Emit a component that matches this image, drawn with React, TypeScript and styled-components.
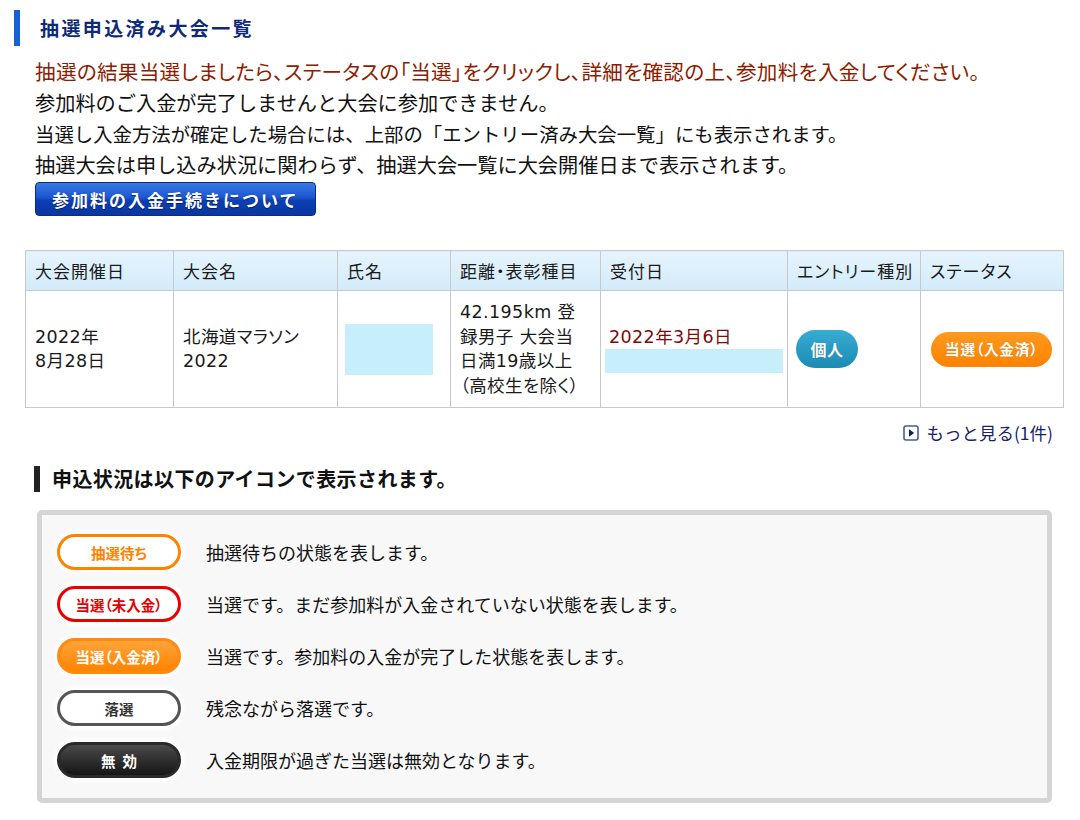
import React from 'react';
import styled, { createGlobalStyle, css } from 'styled-components';

const JP = `"Noto Sans CJK JP", "Noto Sans", sans-serif`;
const TABLE_FONT = `"DejaVu Sans", "Noto Sans CJK JP", sans-serif`;

const GlobalStyle = createGlobalStyle`
  html, body {
    margin: 0;
    padding: 0;
    background: #ffffff;
  }
  body {
    font-family: ${JP};
    color: #111111;
  }
`;

const Page = styled.div`
  width: 1080px;
  padding-top: 10px;
  padding-bottom: 18px;
`;

const PageTitle = styled.h1`
  margin: 0 0 0 14px;
  height: 36px;
  border-left: 6px solid #1462d4;
  padding-left: 20px;
  font-size: 19px;
  line-height: 36px;
  font-weight: 700;
  letter-spacing: 2.4px;
  color: #0f2a78;
`;

const Notes = styled.div`
  margin-top: 10px;
  padding-left: 35px;
`;

type NoteTone = 'alert' | 'plain' | 'narrow';

const Note = styled.p<{ $tone?: NoteTone }>`
  margin: 0;
  font-size: 20.2px;
  line-height: 31px;
  color: #111111;
  white-space: nowrap;
  ${(p) =>
    p.$tone === 'alert' &&
    css`
      font-size: 20.6px;
      letter-spacing: 0.3px;
      font-feature-settings: 'palt';
      color: #8e1c00;
    `}
  ${(p) =>
    p.$tone === 'narrow' &&
    css`
      font-size: 19.4px;
    `}
`;

const PayButton = styled.button`
  display: block;
  margin-top: 2px;
  width: 281px;
  height: 34px;
  padding: 0 0 0 16px;
  text-align: left;
  border: 1px solid #0a2b86;
  border-radius: 4px;
  background: linear-gradient(#3a7ae6 0%, #1c56cf 45%, #0c3fb4 55%, #0a37a0 100%);
  color: #ffffff;
  font-family: ${JP};
  font-size: 17px;
  font-weight: 700;
  letter-spacing: 2px;
  text-shadow: 0 1px 1px rgba(0, 0, 40, 0.6);
  cursor: pointer;
`;

const EntryTable = styled.table`
  margin: 34px 0 0 25px;
  width: 1038px;
  border-collapse: collapse;
  table-layout: fixed;
  border: 1px solid #c9c9c9;
  font-family: ${TABLE_FONT};
  font-feature-settings: 'palt';
`;

const HeadCell = styled.th`
  height: 39px;
  padding: 0 9px;
  text-align: left;
  font-family: ${JP};
  font-size: 17px;
  font-weight: 400;
  letter-spacing: 1px;
  color: #1a1a1a;
  background: linear-gradient(#e6f4fd, #d3ebfa);
  border: 1px solid #c9c9c9;
  white-space: nowrap;
`;

const BodyCell = styled.td<{ $pad?: number }>`
  height: 116px;
  padding: 0 ${(p) => p.$pad ?? 9}px;
  vertical-align: middle;
  font-size: 17.5px;
  line-height: 24.5px;
  letter-spacing: 0.4px;
  color: #1a1a1a;
  border: 1px solid #c9c9c9;
  white-space: nowrap;
`;

const Masked = styled.div<{ $w: number; $h: number }>`
  width: ${(p) => p.$w}px;
  height: ${(p) => p.$h}px;
  background: #c6eefb;
`;

const ReceiptDate = styled.div`
  padding-left: 4px;
  color: #7d0a0a;
`;

const Pill = styled.span<{ $kind: 'solo' | 'paid' }>`
  display: inline-flex;
  align-items: center;
  justify-content: center;
  font-family: ${JP};
  font-weight: 700;
  color: #ffffff;
  text-shadow: 0 0 1px rgba(0, 0, 0, 0.25);
  ${(p) =>
    p.$kind === 'solo'
      ? css`
          width: 62px;
          height: 38px;
          border-radius: 19px;
          font-size: 16px;
          background: linear-gradient(#38acd2, #1b8bb4);
        `
      : css`
          width: 121px;
          height: 35px;
          border-radius: 18px;
          font-size: 15px;
          letter-spacing: 0.5px;
          background: linear-gradient(#ff9a1e, #ff8200);
        `}
`;

const PillWrap = styled.div<{ $left: number }>`
  display: flex;
  padding-left: ${(p) => p.$left}px;
`;

const MoreRow = styled.div`
  display: flex;
  justify-content: flex-end;
  margin-top: 13px;
  padding-right: 27px;
`;

const MoreLink = styled.a`
  display: inline-flex;
  align-items: center;
  gap: 7px;
  font-size: 17.5px;
  line-height: 24px;
  color: #18236a;
  text-decoration: none;
  cursor: pointer;
`;

const SectionTitle = styled.h2`
  margin: 21px 0 0 34px;
  height: 26px;
  border-left: 6px solid #222222;
  padding-left: 12px;
  font-size: 20px;
  line-height: 26px;
  font-weight: 700;
  letter-spacing: 0.4px;
  color: #111111;
`;

const LegendBox = styled.div`
  box-sizing: border-box;
  margin: 18px 0 0 37px;
  width: 1015px;
  border: 5px solid #d5d5d5;
  border-radius: 5px;
  background: #f8f8f8;
  padding: 19px 15px 20px;
  display: flex;
  flex-direction: column;
  gap: 16px;
`;

const LegendRow = styled.div`
  display: flex;
  align-items: center;
  gap: 25px;
`;

type BadgeKind = 'waiting' | 'unpaid' | 'paid' | 'lost' | 'void';

const badgeLook: Record<BadgeKind, ReturnType<typeof css>> = {
  waiting: css`
    border: 3px solid #ff8200;
    background: #ffffff;
    color: #ff8200;
  `,
  unpaid: css`
    border: 3px solid #ea0000;
    background: #ffffff;
    color: #e60000;
  `,
  paid: css`
    border: 3px solid #ff8a10;
    background: linear-gradient(#ffa43a, #ff8300);
    color: #ffffff;
  `,
  lost: css`
    border: 3px solid #555555;
    background: #ffffff;
    color: #333333;
  `,
  void: css`
    border: 3px solid #2a2a2a;
    background: linear-gradient(#4a4a4a, #151515);
    color: #ffffff;
    letter-spacing: 7px;
    padding-left: 7px;
  `,
};

const Badge = styled.span<{ $kind: BadgeKind }>`
  box-sizing: border-box;
  flex: none;
  display: inline-flex;
  align-items: center;
  justify-content: center;
  width: 124px;
  height: 36px;
  border-radius: 18px;
  font-size: 14.5px;
  font-weight: 700;
  font-feature-settings: 'palt';
  box-shadow: 0 0 4px 3px #ffffff;
  ${(p) => badgeLook[p.$kind]}
`;

const LegendText = styled.span`
  font-size: 18px;
  line-height: 24px;
  color: #111111;
`;

const PlayIcon = () => (
  <svg width="16" height="16" viewBox="0 0 16 16" aria-hidden="true">
    <rect x="1" y="1" width="14" height="14" rx="2" fill="#ffffff" stroke="#41609e" strokeWidth="1.6" />
    <path d="M6 4.3 L11.2 8 L6 11.7 Z" fill="#13205e" />
  </svg>
);

const legend: { kind: BadgeKind; label: string; text: string }[] = [
  { kind: 'waiting', label: '抽選待ち', text: '抽選待ちの状態を表します。' },
  { kind: 'unpaid', label: '当選（未入金）', text: '当選です。まだ参加料が入金されていない状態を表します。' },
  { kind: 'paid', label: '当選（入金済）', text: '当選です。参加料の入金が完了した状態を表します。' },
  { kind: 'lost', label: '落選', text: '残念ながら落選です。' },
  { kind: 'void', label: '無効', text: '入金期限が過ぎた当選は無効となります。' },
];

const columns = [
  { title: '大会開催日', width: 148 },
  { title: '大会名', width: 164 },
  { title: '氏名', width: 113 },
  { title: '距離・表彰種目', width: 150 },
  { title: '受付日', width: 187 },
  { title: 'エントリー種別', width: 133 },
  { title: 'ステータス', width: 143 },
];

const App: React.FC = () => (
  <React.Fragment>
    <GlobalStyle />
    <Page>
      <PageTitle>抽選申込済み大会一覧</PageTitle>
      <Notes>
        <Note $tone="alert">
          抽選の結果当選しましたら、ステータスの「当選」をクリックし、詳細を確認の上、参加料を入金してください。
        </Note>
        <Note>参加料のご入金が完了しませんと大会に参加できません。</Note>
        <Note $tone="narrow">当選し入金方法が確定した場合には、上部の「エントリー済み大会一覧」にも表示されます。</Note>
        <Note>抽選大会は申し込み状況に関わらず、抽選大会一覧に大会開催日まで表示されます。</Note>
        <PayButton>参加料の入金手続きについて</PayButton>
      </Notes>

      <EntryTable>
        <colgroup>
          {columns.map((c) => (
            <col key={c.title} style={{ width: c.width }} />
          ))}
        </colgroup>
        <thead>
          <tr>
            {columns.map((c) => (
              <HeadCell key={c.title}>{c.title}</HeadCell>
            ))}
          </tr>
        </thead>
        <tbody>
          <tr>
            <BodyCell>
              2022年
              <br />
              8月28日
            </BodyCell>
            <BodyCell>
              北海道マラソン
              <br />
              2022
            </BodyCell>
            <BodyCell $pad={7}>
              <Masked $w={88} $h={51} />
            </BodyCell>
            <BodyCell>
              42.195km 登
              <br />
              録男子 大会当
              <br />
              日満19歳以上
              <br />
              （高校生を除く）
            </BodyCell>
            <BodyCell $pad={4}>
              <ReceiptDate>2022年3月6日</ReceiptDate>
              <Masked $w={178} $h={24} />
            </BodyCell>
            <BodyCell $pad={0}>
              <PillWrap $left={8}>
                <Pill $kind="solo">個人</Pill>
              </PillWrap>
            </BodyCell>
            <BodyCell $pad={0}>
              <PillWrap $left={10}>
                <Pill $kind="paid">当選（入金済）</Pill>
              </PillWrap>
            </BodyCell>
          </tr>
        </tbody>
      </EntryTable>

      <MoreRow>
        <MoreLink>
          <PlayIcon />
          もっと見る(1件)
        </MoreLink>
      </MoreRow>

      <SectionTitle>申込状況は以下のアイコンで表示されます。</SectionTitle>
      <LegendBox>
        {legend.map((item) => (
          <LegendRow key={item.kind}>
            <Badge $kind={item.kind}>{item.label}</Badge>
            <LegendText>{item.text}</LegendText>
          </LegendRow>
        ))}
      </LegendBox>
    </Page>
  </React.Fragment>
);

export default App;
